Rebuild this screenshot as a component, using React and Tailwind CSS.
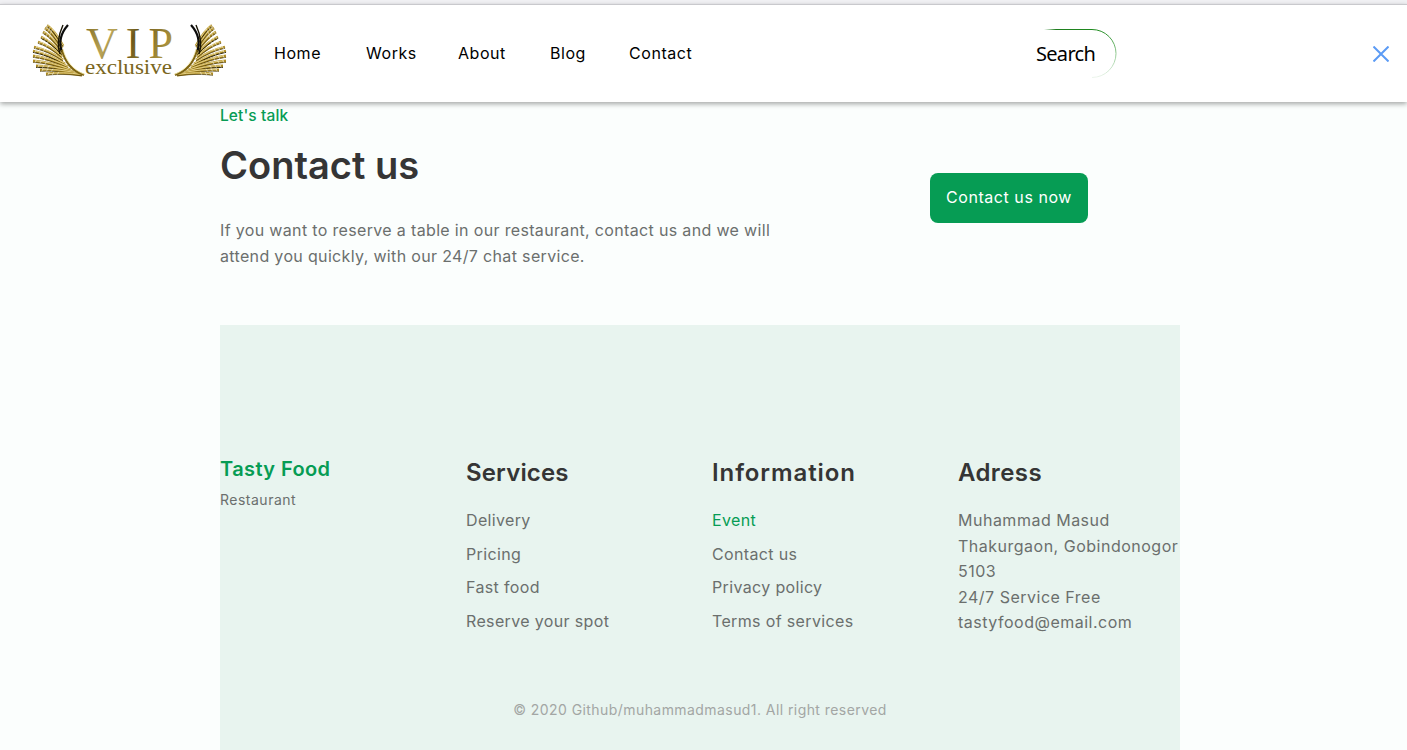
import React from "react";

const feathers = [
  [47, 25.500, 54, 30, 63, 46], [45, 28, 53, 33, 62, 48], [43, 32, 52, 37, 62, 51], [41, 37, 51, 42, 62, 54], [38, 42, 50, 46, 62, 57], [34, 47, 48, 50, 63, 60],
  [33, 51, 48, 54, 65, 64], [33, 56, 49, 58, 68, 67], [33, 61, 50, 62, 71, 70], [36, 66, 52, 66, 74, 72], [40, 70, 56, 69, 77, 73.500], [46, 74, 62, 72, 82, 75],
];

function Wing() {
  return (
    <g>
      {feathers.map(([x1, y1, cx, cy, x2, y2], i) => (
        <g key={i} fill="none">
          <path d={`M${x1} ${y1}Q${cx} ${cy} ${x2} ${y2}`} stroke="#b08d24" strokeWidth="2.8" />
          <path d={`M${x1} ${y1 + 1.3}Q${cx} ${cy + 1.3} ${x2} ${y2 + 0.8}`} stroke="#1d1703" strokeWidth={i % 3 === 0 ? 0.9 : 0.5} />
          <path d={`M${x1 + 2} ${y1 - 0.2}Q${cx} ${cy - 0.5} ${x2} ${y2 - 0.5}`} stroke="#f8edb4" strokeWidth="0.7" />
          {[0.1, 0.24, 0.38].map((t) => {
            const a = (1 - t) * (1 - t), b = 2 * t * (1 - t), c = t * t;
            const px = a * x1 + b * cx + c * x2;
            const py = a * y1 + b * cy + c * y2;
            return <path key={t} d={`M${px} ${py - 1.4}l-1.600 3`} stroke="#ffffff" strokeWidth="0.5" />;
          })}
        </g>
      ))}
      <path d="M68 25C60 34 59 44 62 52" fill="none" stroke="#0c0c0c" strokeWidth="2.2" />
      <path d="M63 25C58 36 57 46 60 54" fill="none" stroke="#171304" strokeWidth="1.4" />
      <path d="M62 50C65 62 72 71 84 75" fill="none" stroke="#7e6412" strokeWidth="2.2" />
      <path d="M63 49C66 61 73 70 85 74.500" fill="none" stroke="#f3e6a2" strokeWidth="0.8" />
    </g>
  );
}

function Logo() {
  return (
    <svg width="240" height="97" viewBox="0 5 240 97" className="block shrink-0">
      <defs>
        <linearGradient id="gold" x1="0" y1="0" x2="1" y2="0.3">
          <stop offset="0" stopColor="#7d6a20" />
          <stop offset="0.35" stopColor="#b9a458" />
          <stop offset="0.6" stopColor="#6a5719" />
          <stop offset="1" stopColor="#a8903c" />
        </linearGradient>
      </defs>
      <Wing />
      <g transform="translate(259 0) scale(-1 1)">
        <Wing />
      </g>
      <text x="86" y="57.500" fill="url(#gold)" fontFamily="Liberation Serif, serif" fontSize="44" textLength="87" lengthAdjust="spacing">VIP</text>
      <text x="85" y="74" fill="#7a6620" fontFamily="Liberation Serif, serif" fontSize="21" textLength="87" lengthAdjust="spacingAndGlyphs">exclusive</text>
    </svg>
  );
}

const font = "font-['Inter','Open_Sans',sans-serif]";

function FooterList({ title, items, active, track }) {
  return (
    <div>
      <h3 className={`text-[24px] leading-[36px] font-semibold text-[#353535] ${track}`}>{title}</h3>
      <ul className="mt-[18px] flex flex-col gap-[11.600px]">
        {items.map((t) => (
          <li key={t} className={`text-[16px] leading-[22px] tracking-[0.35px] ${t === active ? "text-[#069c54]" : "text-[#6b6f6d]"}`}>{t}</li>
        ))}
      </ul>
    </div>
  );
}

export default function App() {
  return (
    <div className={`${font} min-h-[750px] h-[750px] overflow-hidden bg-[#fbfefd]`}>
      <div className="h-[4px] bg-[#f1f1f4]" />
      <header className="relative z-10 h-[98px] flex items-center bg-white border-t border-[#c9c9cd] shadow-[0_2px_5px_rgba(0,0,0,0.35)]">
        <Logo />
        <nav className="ml-[34px] flex pb-[1px] text-[16px] text-black tracking-[0.55px]">
          <a className="w-[92px]">Home</a>
          <a className="w-[92px]">Works</a>
          <a className="w-[92px]">About</a>
          <a className="w-[79px]">Blog</a>
          <a className="w-[66px]">Contact</a>
        </nav>
        <div className="relative ml-[341px] w-[81px] h-[49px] flex items-center font-['Noto_Sans',sans-serif] text-[20px] text-black tracking-[-0.7px]">
          Search
          <svg className="absolute left-0 top-0" width="81" height="49" viewBox="0 0 81 49" fill="none">
            <defs>
              <linearGradient id="sr" gradientUnits="userSpaceOnUse" x1="0" y1="0" x2="0" y2="49">
                <stop offset="0" stopColor="#1f8a1f" />
                <stop offset="0.55" stopColor="#9ccf9c" />
                <stop offset="1" stopColor="#eef6ee" />
              </linearGradient>
              <linearGradient id="st" gradientUnits="userSpaceOnUse" x1="8" y1="0" x2="56" y2="0">
                <stop offset="0" stopColor="#ffffff" />
                <stop offset="0.25" stopColor="#1f7d1f" />
                <stop offset="1" stopColor="#1f8a1f" />
              </linearGradient>
            </defs>
            <path d="M8 .5H56" stroke="url(#st)" />
            <path d="M56 .5a24 24 0 0 1 0 48" stroke="url(#sr)" />
          </svg>
        </div>
        <svg className="absolute right-[18px] top-[41px]" width="16" height="16" viewBox="0 0 16 16" fill="none" stroke="#5b9bf5" strokeWidth="2">
          <path d="M.5.5l15 15M15.500.5l-15 15" />
        </svg>
      </header>

      <main className="ml-[220px] w-[960px]">
        <section className="flex items-start h-[223px]">
          <div className="w-[710px]">
            <p className="text-[15.500px] leading-[26px] font-medium text-[#069c54] mt-[1px] tracking-[0.1px]">Let's talk</p>
            <h2 className="text-[38px] leading-[54px] font-semibold text-[#353535] mt-[9px]">Contact us</h2>
            <p className="mt-[25px] w-[565px] text-[16px] leading-[26.400px] text-[#6b6f6d] tracking-[0.34px]">
              If you want to reserve a table in our restaurant, contact us and we will attend you quickly, with our 24/7 chat service.
            </p>
          </div>
          <a className="mt-[71px] w-[158px] h-[50px] flex items-center justify-center pb-[2px] rounded-[8px] bg-[#069c54] text-white text-[16px] tracking-[0.55px] whitespace-nowrap">Contact us now</a>
        </section>

        <footer className="h-[425px] bg-[#e8f4ef] pt-[130px]">
          <div className="grid grid-cols-4 gap-[24px]">
            <div className="-mt-[1px]">
              <h3 className="text-[20px] leading-[30px] font-semibold text-[#069c54] tracking-[0.4px]">Tasty Food</h3>
              <p className="mt-[6px] text-[14px] leading-[20px] text-[#6b6f6d] tracking-[0.5px]">Restaurant</p>
            </div>
            <FooterList title="Services" track="tracking-[0.15px]" items={["Delivery", "Pricing", "Fast food", "Reserve your spot"]} />
            <FooterList title="Information" track="tracking-[0.9px]" items={["Event", "Contact us", "Privacy policy", "Terms of services"]} active="Event" />
            <div>
              <h3 className="text-[24px] leading-[36px] font-semibold text-[#353535] tracking-[0.4px]">Adress</h3>
              <p className="mt-[17px] w-[224px] text-[16px] leading-[25.600px] text-[#6b6f6d] tracking-[0.5px]">
                Muhammad Masud<br />Thakurgaon, Gobindonogor 5103<br />24/7 Service Free<br />tastyfood@email.com
              </p>
            </div>
          </div>
          <p className="mt-[64px] text-center text-[14px] leading-[20px] text-[#a3a6a4] tracking-[0.43px]">© 2020 Github/muhammadmasud1. All right reserved</p>
        </footer>
      </main>
    </div>
  );
}
